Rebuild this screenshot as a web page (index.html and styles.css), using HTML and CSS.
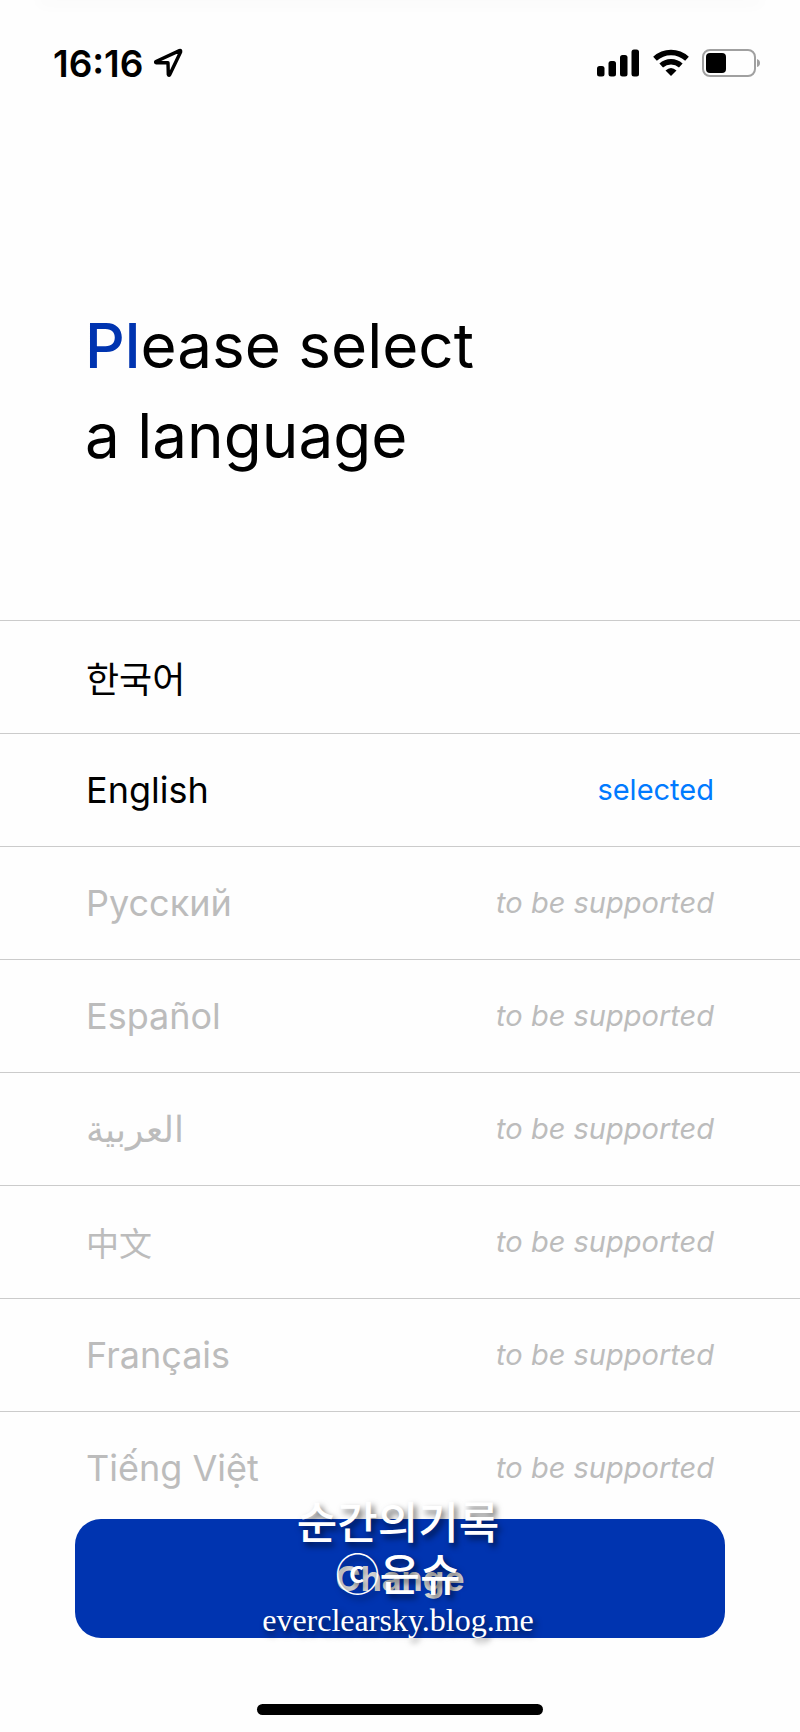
FILE: index.html
```html
<!DOCTYPE html>
<html lang="en">
<head>
<meta charset="utf-8">
<meta name="viewport" content="width=device-width, initial-scale=1">
<title>Please select a language</title>
<link rel="stylesheet" href="styles.css">
</head>
<body>
<div class="screen">
  <header class="status-bar">
    <div class="status-left">
      <span class="time">16:16</span>
      <svg class="location" viewBox="0 0 30 30" aria-hidden="true"><path d="M26.500 2.600 3 13.500Q2 14.600 3.500 14.800H15L15.300 26.500Q15.800 28 16.800 26.500L27.600 4Q28 2 26.500 2.600Z" fill="none" stroke="#000" stroke-width="3.400" stroke-linejoin="round"/></svg>
    </div>
    <div class="status-right">
      <svg class="signal" viewBox="0 0 43 28" aria-hidden="true"><rect x="0" y="17" width="7.500" height="10.500" rx="2.500"/><rect x="11.500" y="12" width="7.500" height="15.500" rx="2.500"/><rect x="23" y="6" width="7.500" height="21.500" rx="2.500"/><rect x="34.500" y="0.500" width="7.500" height="27" rx="2.500"/></svg>
      <svg class="wifi" viewBox="0 0 36 28" aria-hidden="true"><path d="M2 9.800A23.500 23.500 0 0 1 34 9.800M8.200 16.600A14.500 14.500 0 0 1 27.800 16.600" fill="none" stroke="#000" stroke-width="5.400"/><path d="M12.500 21.500Q18 16.500 23.500 21.500L18 27Z"/></svg>
      <svg class="battery" viewBox="0 0 60 28" aria-hidden="true"><rect x="1" y="1" width="52" height="26" rx="7" fill="none" stroke="#a0a0a0" stroke-width="2"/><rect x="4" y="4" width="20" height="20" rx="4"/><path d="M55 10Q58 11 58 14Q58 17 55 18Z" fill="#a0a0a0"/></svg>
    </div>
  </header>
  <main class="content">
    <h1 class="title"><span class="accent">Pl</span>ease select<br>a language</h1>
    <ul class="languages">
      <li class="language"><span class="name" lang="ko">한국어</span></li>
      <li class="language"><span class="name">English</span><span class="state selected">selected</span></li>
      <li class="language pending"><span class="name" lang="ru">Русский</span><span class="state">to be supported</span></li>
      <li class="language pending"><span class="name" lang="es">Español</span><span class="state">to be supported</span></li>
      <li class="language pending"><span class="name" lang="ar">العربية</span><span class="state">to be supported</span></li>
      <li class="language pending"><span class="name chinese" lang="zh">中文</span><span class="state">to be supported</span></li>
      <li class="language pending"><span class="name" lang="fr">Français</span><span class="state">to be supported</span></li>
      <li class="language pending"><span class="name" lang="vi">Tiếng Việt</span><span class="state">to be supported</span></li>
    </ul>
  </main>
  <footer class="footer">
    <button class="change" type="button">Change</button>
    <div class="watermark">
      <span class="mark-line">순간의기록</span>
      <span class="mark-line">ⓒ은슈</span>
      <span class="mark-url">everclearsky.blog.me</span>
    </div>
    <div class="home-indicator"></div>
  </footer>
</div>
</body>
</html>
```
FILE: styles.css
```css
* {
  box-sizing: border-box;
}

body {
  margin: 0;
  background: #fefefe;
  color: #000;
  font-family: Inter, "Noto Sans CJK KR", sans-serif;
}

.screen {
  display: flex;
  flex-direction: column;
  min-height: 100vh;
}

.screen::before {
  content: "";
  height: 0;
  margin: 0 40px;
  box-shadow: 0 0 16px 2px rgba(0, 0, 0, 0.06);
}

.status-bar {
  display: flex;
  justify-content: space-between;
  align-items: center;
  height: 126px;
  padding: 0 38px 0 53px;
}

.status-left {
  display: flex;
  align-items: center;
  gap: 10px;
}

.time {
  font-size: 37px;
  font-weight: 600;
}

.location {
  width: 30px;
  height: 30px;
}

.status-right {
  display: flex;
  align-items: center;
  gap: 13px;
}

.signal {
  width: 43px;
  height: 28px;
}

.wifi {
  width: 36px;
  height: 28px;
}

.battery {
  width: 60px;
  height: 28px;
}

.title {
  margin: 0;
  padding: 175px 85px 139px;
  font-size: 62px;
  font-weight: 400;
  line-height: 90px;
}

.accent {
  color: #0034b0;
  font-weight: 500;
}

.languages {
  margin: 0;
  padding: 0;
  list-style: none;
}

.language {
  display: flex;
  justify-content: space-between;
  align-items: center;
  height: 113px;
  padding: 0 86px;
  border-top: 1px solid #cbcbcb;
}

.name {
  font-size: 36px;
}

.name.chinese {
  font-size: 33px;
}

.state {
  padding-bottom: 2px;
  font-size: 29px;
  font-style: italic;
}

.state.selected {
  color: #007aff;
  font-style: normal;
}

.pending {
  color: #bcbcbc;
}

.footer {
  position: relative;
  margin-top: -5px;
  padding: 0 75px;
}

.change {
  display: block;
  width: 100%;
  height: 119px;
  border: 0;
  border-radius: 26px;
  background: #0034b0;
  color: #d4d4d4;
  font: 700 34px Inter, sans-serif;
}

.watermark {
  position: absolute;
  top: -20px;
  left: 0;
  right: 4px;
  display: flex;
  flex-direction: column;
  align-items: center;
  color: #fff;
  font-family: "Liberation Serif", "Noto Sans CJK KR", serif;
  font-weight: 500;
  text-shadow: 3px 4px 6px rgba(0, 0, 0, 0.6);
  pointer-events: none;
}

.mark-line {
  font-size: 44px;
  line-height: 52px;
}

.mark-url {
  font-size: 32px;
  line-height: 34px;
}

.home-indicator {
  width: 286px;
  height: 11px;
  margin: 66px auto 17px;
  border-radius: 6px;
  background: #000;
}
```
